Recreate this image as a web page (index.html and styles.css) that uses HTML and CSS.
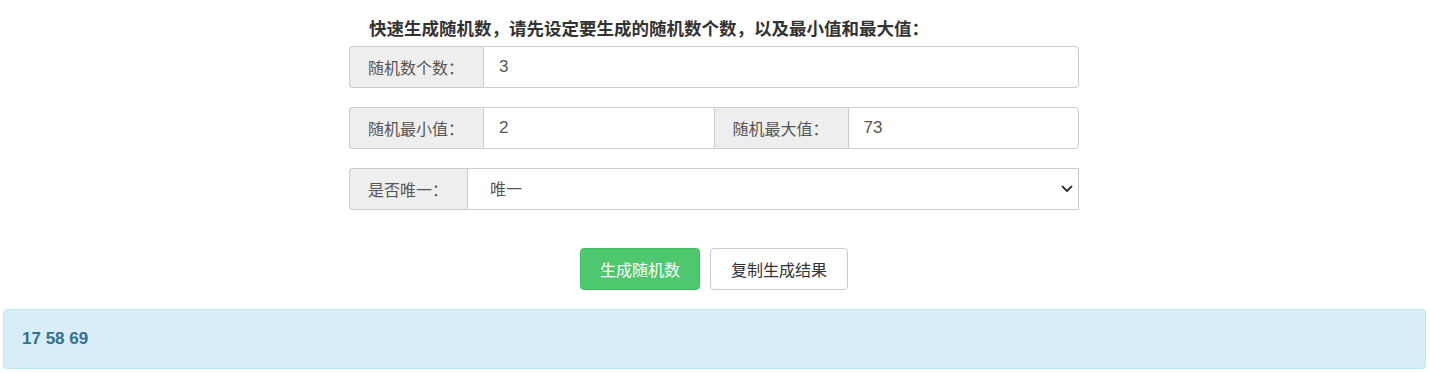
FILE: index.html
```html
<!DOCTYPE html>
<html lang="zh-CN">
<head>
    <meta charset="UTF-8">
    <meta name="viewport" content="width=device-width, initial-scale=1.0">
    <title>随机数生成器</title>
    <link rel="stylesheet" href="styles.css">
</head>
<body>
    <div class="panel">
        <h4 class="intro">快速生成随机数，请先设定要生成的随机数个数，以及最小值和最大值：</h4>

        <div class="input-group">
            <span class="addon">随机数个数：</span>
            <input class="field" type="text" value="3">
        </div>

        <div class="input-group">
            <span class="addon">随机最小值：</span>
            <input class="field" type="text" value="2">
            <span class="addon addon-mid">随机最大值：</span>
            <input class="field" type="text" value="73">
        </div>

        <div class="input-group">
            <span class="addon">是否唯一：</span>
            <div class="select-wrap">
                <select class="field select">
                    <option>唯一</option>
                    <option>不唯一</option>
                </select>
                <svg class="chevron" width="12" height="8" viewBox="0 0 12 8">
                    <path d="M1.5 1.5 L6 6 L10.5 1.5" fill="none" stroke="#333" stroke-width="1.8" stroke-linecap="round" stroke-linejoin="round"/>
                </svg>
            </div>
        </div>

        <div class="actions">
            <button class="btn btn-green">生成随机数</button>
            <button class="btn btn-plain">复制生成结果</button>
        </div>
    </div>

    <div class="result">17 58 69</div>
</body>
</html>
```

FILE: styles.css
```css
body {
    margin: 0;
    padding: 0;
    font-family: "Liberation Sans", "Noto Sans CJK SC", sans-serif;
    color: #333;
    background-color: #fff;
}
.panel {
    width: 730px;
    margin-left: calc(50% - 366px);
    padding-top: 18px;
}
.intro {
    margin: 0 0 6px 0;
    padding-left: 20px;
    font-size: 17.5px;
    line-height: 22px;
    font-weight: bold;
    color: #333;
}
.input-group {
    display: flex;
    height: 42px;
    margin-bottom: 19px;
}
.addon {
    display: flex;
    align-items: center;
    padding: 0 19px 0 18px;
    font-size: 16px;
    color: #555;
    background-color: #eee;
    border: 1px solid #ccc;
    border-right: none;
    border-radius: 4px 0 0 4px;
    white-space: nowrap;
}
.addon-mid {
    border-radius: 0;
    border-left: none;
}
.field {
    flex: 1;
    min-width: 0;
    height: 42px;
    box-sizing: border-box;
    padding: 0 15px;
    font-family: inherit;
    font-size: 17px;
    color: #555;
    background-color: #fff;
    border: 1px solid #ccc;
    border-radius: 0 4px 4px 0;
    outline: none;
}
.input-group .field:not(:last-child) {
    border-radius: 0;
}
.select-wrap {
    flex: 1;
    display: flex;
    position: relative;
}
.select {
    appearance: none;
    -webkit-appearance: none;
    padding-left: 22px;
    font-size: 16px;
}
.chevron {
    position: absolute;
    right: 6px;
    top: 17px;
    pointer-events: none;
}
.actions {
    display: flex;
    justify-content: center;
    gap: 10px;
    margin-top: 38px;
    margin-bottom: 19px;
}
.btn {
    height: 42px;
    padding: 0 19px;
    font-family: inherit;
    font-size: 16px;
    border-radius: 4px;
    cursor: pointer;
}
.btn-green {
    color: #fff;
    background-color: #4ec86f;
    border: 1px solid #45bb64;
}
.btn-plain {
    padding: 0 20px;
    color: #333;
    background-color: #fff;
    border: 1px solid #ccc;
}
.result {
    margin: 0 4px 0 3px;
    height: 60px;
    box-sizing: border-box;
    display: flex;
    align-items: center;
    padding-left: 18px;
    font-size: 17px;
    font-weight: bold;
    color: #31708f;
    background-color: #d9edf7;
    border: 1px solid #bce8f1;
    border-radius: 4px;
}
```
